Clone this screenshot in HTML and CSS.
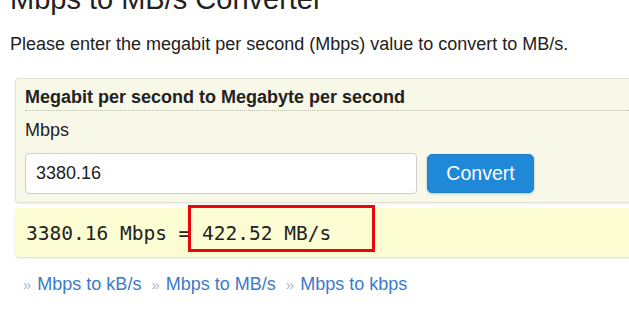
FILE: index.html
```html
<!DOCTYPE html>
<html>
<head>
<meta charset="utf-8">
<link rel="stylesheet" href="styles.css">
</head>
<body>
<div class="page">
  <h1 class="title">Mbps to MB/s Converter</h1>
  <p class="intro">Please enter the megabit per second (Mbps) value to convert to MB/s.</p>
  <div class="panel">
    <div class="panel-head">Megabit per second to Megabyte per second</div>
    <div class="label">Mbps</div>
    <div class="form-row">
      <input class="field" type="text" value="3380.16">
      <button class="btn">Convert</button>
    </div>
  </div>
  <div class="result">
    <span class="res-text">3380.16 Mbps = 422.52 MB/s</span>
    <span class="highlight"></span>
  </div>
  <div class="links">
    <span class="sep">»</span><a href="#">Mbps to kB/s</a>
    <span class="sep">»</span><a href="#">Mbps to MB/s</a>
    <span class="sep">»</span><a href="#">Mbps to kbps</a>
  </div>
</div>
</body>
</html>
```
FILE: styles.css
```css
html, body {
  margin: 0;
  padding: 0;
  background: #fff;
}
body {
  font-family: "Liberation Sans", Arial, sans-serif;
  color: #222;
  overflow: hidden;
}
.page {
  padding-left: 10px;
}
.title {
  font-size: 29px;
  font-weight: normal;
  line-height: 34px;
  margin: -18px 0 0 0;
  color: #222;
}
.intro {
  font-size: 18px;
  margin: 17px 0 0 0;
  line-height: 22px;
}
.panel {
  margin: 23px -20px 0 5px;
  background: #f8f8e9;
  border: 1px solid #e3e3d3;
  border-radius: 4px;
  padding: 7px 9px 8px 9px;
  box-shadow: 0 1px 2px rgba(0,0,0,0.08);
}
.panel-head {
  font-weight: bold;
  font-size: 18px;
  line-height: 22px;
  padding-bottom: 2px;
  border-bottom: 1px dotted #bdbdad;
}
.label {
  font-size: 18px;
  line-height: 22px;
  margin-top: 8px;
}
.form-row {
  display: flex;
  align-items: center;
  gap: 10px;
  margin-top: 12px;
}
.field {
  box-sizing: border-box;
  width: 392px;
  height: 41px;
  border: 1px solid #cfcfcf;
  border-radius: 4px;
  background: #fff;
  font-family: "Liberation Sans", Arial, sans-serif;
  font-size: 18px;
  color: #222;
  padding: 0 10px;
  margin: 0;
}
.btn {
  box-sizing: border-box;
  width: 107px;
  height: 39px;
  background: #1f88d7;
  border: 1px solid #1a80cc;
  border-radius: 5px;
  color: #fff;
  font-family: "Liberation Sans", Arial, sans-serif;
  font-size: 19.5px;
  padding: 0;
  box-shadow: 0 1px 3px rgba(0,0,0,0.2);
}
.result {
  position: relative;
  margin: 5px -20px 0 5px;
  background: #fdfdd4;
  border-radius: 4px;
  box-shadow: 0 1px 2px rgba(0,0,0,0.15);
  height: 49px;
  display: flex;
  align-items: center;
  padding-left: 11px;
}
.res-text {
  font-family: "DejaVu Sans Mono", "Liberation Mono", monospace;
  font-size: 19.5px;
  color: #222;
  padding-top: 2px;
}
.highlight {
  position: absolute;
  left: 173px;
  top: -3px;
  width: 181px;
  height: 41px;
  border: 3px solid #e8060c;
}
.links {
  margin-top: 16px;
  padding-left: 13px;
  font-size: 18px;
  line-height: 22px;
}
.links a {
  color: #3a7bc9;
  text-decoration: none;
  margin-right: 5px;
}
.sep {
  color: #a7b8cc;
  font-size: 15px;
  margin-right: 6px;
}
```
